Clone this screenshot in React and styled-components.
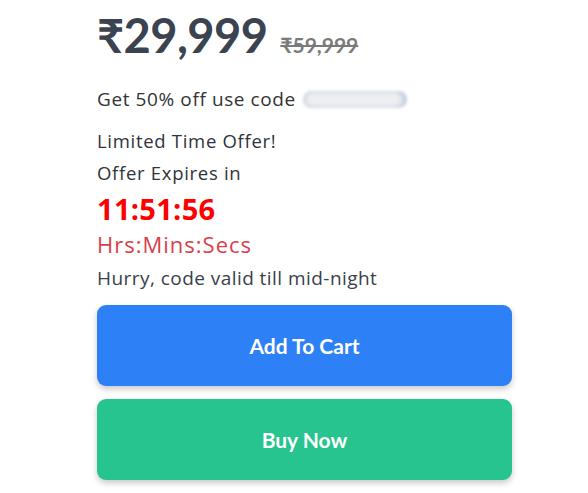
import React from "react";
import styled, { createGlobalStyle } from "styled-components";

const Global = createGlobalStyle`
  html, body { margin: 0; padding: 0; background: #fff; }
  body { font-family: "Open Sans", sans-serif; }
`;

const Page = styled.div`
  width: 588px;
  height: 493px;
  overflow: hidden;
  padding: 12px 76px 0 97px;
  box-sizing: border-box;
  display: flex;
  flex-direction: column;
`;

const PriceRow = styled.div`
  display: flex;
  align-items: baseline;
  gap: 13px;
  line-height: 46px;
  height: 46px;
`;

const Price = styled.span`
  font-family: "Lato", sans-serif;
  font-weight: 700;
  font-size: 47px;
  color: #3b4350;
  letter-spacing: -0.6px;
`;

const OldPrice = styled.span`
  font-family: "Lato", sans-serif;
  font-weight: 700;
  font-size: 21px;
  color: #7a7a7a;
  text-decoration: line-through;
  text-decoration-thickness: 1.5px;
`;

const CodeLine = styled.div`
  display: flex;
  align-items: center;
  margin-top: 29px;
  font-family: "Open Sans", sans-serif;
  font-size: 19px;
  letter-spacing: 0.6px;
  line-height: 24px;
  height: 24px;
  color: #333;
`;

const BlurCode = styled.span`
  display: inline-block;
  margin-left: 7px;
  width: 104px;
  height: 17px;
  border-radius: 9px;
  background: #eceef1;
  filter: blur(1.5px);
  box-shadow: inset -4px 0 4px #bcc9de, inset 3px 0 3px #d3d6da;
`;

const Text = styled.div`
  font-family: "Open Sans", sans-serif;
  font-size: 18.5px;
  letter-spacing: 0.7px;
  color: #2f333a;
  line-height: 32px;
  margin-top: ${(p) => p.$mt || 0}px;
`;

const Timer = styled.div`
  font-family: "Open Sans", sans-serif;
  font-weight: 700;
  font-size: 29px;
  letter-spacing: 0.3px;
  color: #f00;
  line-height: 36px;
  margin-top: 2px;
`;

const Units = styled.div`
  font-family: "Open Sans", sans-serif;
  font-size: 22px;
  letter-spacing: 1px;
  color: #d9404a;
  line-height: 34px;
`;

const Hurry = styled.div`
  font-family: "Open Sans", sans-serif;
  font-size: 19px;
  letter-spacing: 0.45px;
  color: #3a404a;
  line-height: 32px;
  margin-top: 1px;
`;

const Button = styled.button`
  display: flex;
  align-items: center;
  justify-content: center;
  width: 415px;
  height: 81px;
  border: none;
  border-radius: 9px;
  background: ${(p) => p.$bg};
  color: #fff;
  font-family: "Lato", sans-serif;
  font-weight: 700;
  font-size: 21px;
  box-shadow: 0 3px 6px rgba(0, 0, 0, 0.22);
  margin-top: ${(p) => p.$mt}px;
  padding: 0;
  cursor: pointer;
`;

export default function App() {
  return (
    <>
      <Global />
      <Page>
        <PriceRow>
          <Price>₹29,999</Price>
          <OldPrice>₹59,999</OldPrice>
        </PriceRow>
        <CodeLine>
          Get 50% off use code <BlurCode />
        </CodeLine>
        <Text $mt={14}>Limited Time Offer!</Text>
        <Text>Offer Expires in</Text>
        <Timer>11:51:56</Timer>
        <Units>Hrs:Mins:Secs</Units>
        <Hurry>Hurry, code valid till mid-night</Hurry>
        <Button $bg="#2d80f6" $mt={11}>Add To Cart</Button>
        <Button $bg="#27c48f" $mt={13}>Buy Now</Button>
      </Page>
    </>
  );
}
